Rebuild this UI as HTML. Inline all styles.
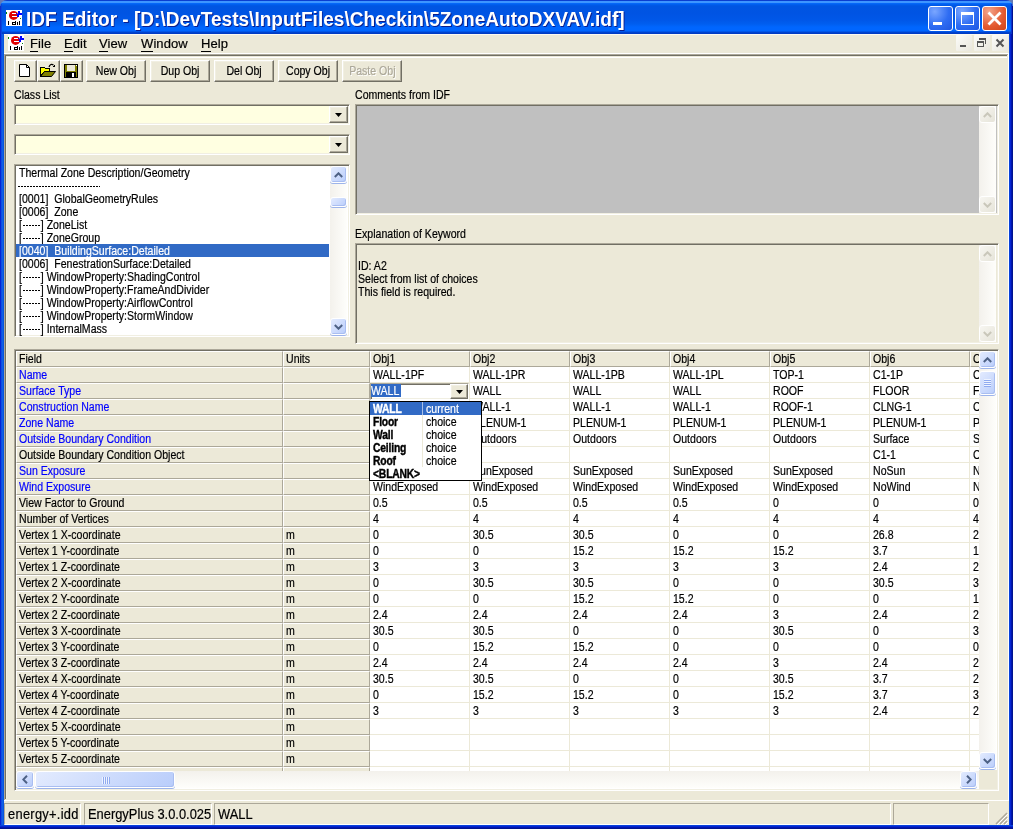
<!DOCTYPE html>
<html><head><meta charset="utf-8"><style>
*{box-sizing:border-box}
html,body{margin:0;padding:0}
body{width:1013px;height:829px;overflow:hidden;position:relative;background:#ece9d8;font-family:"Liberation Sans",sans-serif;font-size:12px;color:#000}
.a{position:absolute}
.t{position:absolute;white-space:nowrap;line-height:13px;font-size:12px;transform:scaleX(.88);transform-origin:0 0;-webkit-text-stroke:0.2px}
.s{display:inline-block;transform:scaleX(.88);transform-origin:0 0;-webkit-text-stroke:0.2px}
#title{left:0;top:0;width:1013px;height:34px;border-radius:7px 7px 0 0;
background:linear-gradient(to bottom,#0a3ed0 0px,#0a3ed0 1px,#3d95ff 1px,#3d95ff 3px,#0a6cff 3px,#0062f2 4px,#0055e2 6px,#0054e3 13px,#0057e8 20px,#005eef 24px,#0066fe 27px,#0066ff 31px,#0046d2 32px,#0038c0 34px)}
#corner{left:0;top:0;width:1013px;height:8px;background:#6379b5}
#ttext{left:26px;top:8px;font-size:20px;line-height:22px;transform:scaleX(.953);transform-origin:0 0;font-weight:bold;color:#fff;white-space:nowrap;text-shadow:1px 1px 0 #0a1e8e}
#lb{left:0;top:34px;width:4px;height:795px;background:linear-gradient(to right,#0019cf,#0831d9 1px,#166aee 2px,#0855dd 3px)}
#rb{left:1009px;top:34px;width:4px;height:795px;background:linear-gradient(to right,#0855dd,#0831d9 1px,#0019cf 2px,#00138f 3px)}
#bb{left:0;top:825px;width:1013px;height:4px;background:linear-gradient(to bottom,#0855dd,#0831d9 1px,#0019cf 2px,#00138f 3px)}
.tb{border-radius:3px;border:1px solid #fff}
.sunk{border:1px solid;border-color:#aca899 #fff #fff #aca899;box-shadow:inset 1px 1px 0 #716f64,inset -1px -1px 0 #f1efe2}
.rais{border:1px solid;border-color:#fff #716f64 #716f64 #fff;box-shadow:inset -1px -1px 0 #aca899,inset 1px 1px 0 #f1efe2;background:#ece9d8}
.btn{text-align:center;line-height:20px}
.menu{font-size:13px;line-height:16px;letter-spacing:0.1px;transform:none}
.menu u{text-decoration:none;border-bottom:1px solid #000}
.xbtn{border:1px solid #fff;border-radius:3px;background:linear-gradient(135deg,#e3ebfe,#b9cdfb);box-shadow:inset -1px -1px 0 #a9bef1,0 1px 0 #9db4ea}
.dbtn{border:1px solid #fff;border-radius:3px;background:linear-gradient(135deg,#f7f6f1,#e6e4d9)}
.dsh{display:inline-block;width:20.5px;height:1px;margin:0 0.6px 0 0.3px;vertical-align:3px;background:repeating-linear-gradient(to right,currentColor 0 2.27px,transparent 2.27px 3.41px)}
.cell{position:absolute;white-space:nowrap;overflow:hidden;line-height:13px;font-size:12px}
</style></head><body><div id="root" style="position:absolute;left:0;top:0;width:1013px;height:829px;will-change:transform">
<div class="a" id="corner"></div><div class="a" id="title"></div>
<div class="a" style="left:0;top:6px;width:1px;height:28px;background:#0a2fcf"></div><div class="a" style="left:1px;top:4px;width:1px;height:30px;background:#0846dc"></div><div class="a" style="left:1012px;top:6px;width:1px;height:28px;background:#00138f"></div><div class="a" style="left:1011px;top:4px;width:1px;height:30px;background:#0a2fcf"></div><svg class="a" style="left:6px;top:10px" width="16" height="16" viewBox="0 0 16 16" shape-rendering="crispEdges"><rect width="16" height="16" fill="#fff"/><ellipse cx="7.6" cy="5.4" rx="4.6" ry="4.5" fill="#e00000" shape-rendering="auto"/><rect x="6" y="3" width="4" height="1" fill="#fff"/><rect x="10" y="3" width="1" height="1" fill="#00f"/><rect x="6" y="6" width="5" height="1" fill="#fff"/><rect x="12" y="1" width="2" height="3" fill="#00f"/><rect x="12" y="3" width="4" height="1.5" fill="#00f"/><rect x="11" y="4" width="2" height="3" fill="#00f"/><rect x="0" y="2" width="1" height="2" fill="#080"/><rect x="14" y="8" width="1" height="1" fill="#080"/><rect x="2" y="11" width="1" height="4" fill="#000"/><path d="M6.5 12.5 H9.5 V14.5 H6.5 Z" fill="none" stroke="#000" stroke-width="1"/><rect x="9" y="11" width="1" height="4" fill="#000"/><rect x="11" y="12" width="1" height="3" fill="#000"/><rect x="13" y="11" width="1" height="4" fill="#000"/></svg><div class="a" id="ttext">IDF Editor - [D:\DevTests\InputFiles\Checkin\5ZoneAutoDXVAV.idf]</div>
<div class="a tb" style="left:928px;top:6px;width:25px;height:25px;background:radial-gradient(circle at 25% 20%,#7aa6ff,#2f6df3 55%,#1f57e2)"><div class="a" style="left:4px;top:15px;width:9px;height:3px;background:#fff"></div></div>
<div class="a tb" style="left:955px;top:6px;width:25px;height:25px;background:radial-gradient(circle at 25% 20%,#7aa6ff,#2f6df3 55%,#1f57e2)"><div class="a" style="left:5px;top:5px;width:13px;height:13px;border:1px solid #fff;border-top-width:3px"></div></div>
<div class="a tb" style="left:982px;top:6px;width:25px;height:25px;background:radial-gradient(circle at 25% 20%,#f3a58c,#e3592f 60%,#cc4418)"><svg class="a" style="left:4px;top:4px" width="15" height="15" viewBox="0 0 15 15"><path d="M1.5 1.5 L13.5 13.5 M13.5 1.5 L1.5 13.5" stroke="#fff" stroke-width="2.8"/></svg></div>
<div class="a" id="lb"></div><div class="a" id="rb"></div><div class="a" id="bb"></div>
<div class="a" style="left:4px;top:34px;width:1005px;height:1px;background:#fdfaf0"></div><svg class="a" style="left:8px;top:35px" width="16" height="16" viewBox="0 0 16 16" shape-rendering="crispEdges"><rect width="16" height="16" fill="#fff"/><ellipse cx="7.6" cy="5.4" rx="4.6" ry="4.5" fill="#e00000" shape-rendering="auto"/><rect x="6" y="3" width="4" height="1" fill="#fff"/><rect x="10" y="3" width="1" height="1" fill="#00f"/><rect x="6" y="6" width="5" height="1" fill="#fff"/><rect x="12" y="1" width="2" height="3" fill="#00f"/><rect x="12" y="3" width="4" height="1.5" fill="#00f"/><rect x="11" y="4" width="2" height="3" fill="#00f"/><rect x="0" y="2" width="1" height="2" fill="#080"/><rect x="14" y="8" width="1" height="1" fill="#080"/><rect x="2" y="11" width="1" height="4" fill="#000"/><path d="M6.5 12.5 H9.5 V14.5 H6.5 Z" fill="none" stroke="#000" stroke-width="1"/><rect x="9" y="11" width="1" height="4" fill="#000"/><rect x="11" y="12" width="1" height="3" fill="#000"/><rect x="13" y="11" width="1" height="4" fill="#000"/></svg><div class="t menu" style="left:30px;top:36px"><u>F</u>ile</div><div class="t menu" style="left:64px;top:36px"><u>E</u>dit</div><div class="t menu" style="left:99px;top:36px"><u>V</u>iew</div><div class="t menu" style="left:141px;top:36px"><u>W</u>indow</div><div class="t menu" style="left:201px;top:36px"><u>H</u>elp</div><div class="a" style="left:956px;top:35px;width:16px;height:16px;background:linear-gradient(135deg,#fcfcf9,#e8e6dc);border-radius:1px"><div class="a" style="left:4px;top:10px;width:6px;height:2px;background:#555"></div></div><div class="a" style="left:974px;top:35px;width:16px;height:16px;background:linear-gradient(135deg,#fcfcf9,#e8e6dc);border-radius:1px"><div class="a" style="left:3px;top:6px;width:7px;height:6px;border:1px solid #555;border-top-width:2px"></div><div class="a" style="left:5px;top:3px;width:7px;height:2px;background:#555"></div><div class="a" style="left:11px;top:3px;width:1px;height:6px;background:#555"></div></div><div class="a" style="left:992px;top:35px;width:16px;height:16px;background:linear-gradient(135deg,#fcfcf9,#e8e6dc);border-radius:1px"><svg class="a" style="left:3px;top:3px" width="10" height="10" viewBox="0 0 10 10"><path d="M1.5 1.5 L8.5 8.5 M8.5 1.5 L1.5 8.5" stroke="#555" stroke-width="2"/></svg></div><div class="a" style="left:4px;top:53px;width:1005px;height:1px;background:#fff"></div><div class="a" style="left:4px;top:54px;width:1004px;height:1px;background:#aca899"></div><div class="a" style="left:5px;top:55px;width:1002px;height:1px;background:#716f64"></div><div class="a" style="left:4px;top:54px;width:1px;height:746px;background:#aca899"></div><div class="a" style="left:5px;top:55px;width:1px;height:744px;background:#716f64"></div><div class="a" style="left:6px;top:57px;width:1001px;height:1px;background:#fff"></div><div class="a" style="left:6px;top:57px;width:1px;height:742px;background:#f5f2e2"></div><div class="a" style="left:4px;top:800px;width:1005px;height:1px;background:#fff"></div><div class="a" style="left:1008px;top:54px;width:1px;height:747px;background:#fff"></div>
<div class="a rais" style="left:14px;top:60px;width:23px;height:22px"></div><div class="a rais" style="left:37px;top:60px;width:23px;height:22px"></div><div class="a rais" style="left:60px;top:60px;width:23px;height:22px"></div><svg class="a" style="left:18px;top:63px" width="14" height="16" viewBox="0 0 14 16"><path d="M1.5 1.5 H8.5 L11.5 4.5 V13.5 H1.5 Z" fill="#fff" stroke="#000" stroke-width="1"/><path d="M8.5 1.5 V4.5 H11.5" fill="none" stroke="#000" stroke-width="1"/></svg><svg class="a" style="left:39px;top:62px" width="18" height="16" viewBox="0 0 18 16" shape-rendering="crispEdges"><path d="M10 5 Q11.5 1 14.5 3" fill="none" stroke="#000" stroke-width="1.2" shape-rendering="auto"/><path d="M13 5 H16 V2 Z" fill="#000"/><path d="M1.5 5.5 H5.5 L6.5 6.5 H10.5 V9.5 H5.5 L1.5 14.5 Z" fill="#ffff00" stroke="#000" stroke-width="1"/><path d="M1.5 14.5 L5.5 9.5 H16.5 L12.5 14.5 Z" fill="#808000" stroke="#000" stroke-width="1" shape-rendering="auto"/></svg><svg class="a" style="left:64px;top:64px" width="14" height="14" viewBox="0 0 14 14" shape-rendering="crispEdges"><rect width="14" height="14" fill="#000"/><rect x="1" y="1" width="12" height="12" fill="#808000"/><rect x="3" y="1" width="8" height="6" fill="#ece9d8"/><rect x="2" y="8" width="10" height="6" fill="#000"/><rect x="8" y="9" width="2" height="4" fill="#fff"/><rect x="12" y="1" width="1" height="1" fill="#fff"/></svg>
<div class="a rais btn" style="left:86px;top:60px;width:60px;height:22px;color:#000"><span class="s" style="transform-origin:50% 0">New Obj</span></div>
<div class="a rais btn" style="left:150px;top:60px;width:60px;height:22px;color:#000"><span class="s" style="transform-origin:50% 0">Dup Obj</span></div>
<div class="a rais btn" style="left:214px;top:60px;width:60px;height:22px;color:#000"><span class="s" style="transform-origin:50% 0">Del Obj</span></div>
<div class="a rais btn" style="left:278px;top:60px;width:60px;height:22px;color:#000"><span class="s" style="transform-origin:50% 0">Copy Obj</span></div>
<div class="a rais btn" style="left:342px;top:60px;width:60px;height:22px;color:#aca899;text-shadow:1px 1px 0 #fff"><span class="s" style="transform-origin:50% 0">Paste Obj</span></div>
<div class="t" style="left:14px;top:89px;">Class List</div>
<div class="a sunk" style="left:14px;top:104px;width:336px;height:21px;background:#ffffe1"></div><div class="a rais" style="left:329px;top:106px;width:19px;height:17px"><svg class="a" style="left:5px;top:6px" width="7" height="4" viewBox="0 0 7 4"><path d="M0 0 H7 L3.5 4 Z" fill="#000"/></svg></div>
<div class="a sunk" style="left:14px;top:134px;width:336px;height:21px;background:#ffffe1"></div><div class="a rais" style="left:329px;top:136px;width:19px;height:17px"><svg class="a" style="left:5px;top:6px" width="7" height="4" viewBox="0 0 7 4"><path d="M0 0 H7 L3.5 4 Z" fill="#000"/></svg></div>
<div class="a sunk" style="left:14px;top:164px;width:336px;height:173px;background:#fff"></div>
<div class="t" style="left:18.5px;top:167px;">Thermal Zone Description/Geometry</div>
<div class="a" style="left:18px;top:186px;width:82px;height:1px;background:repeating-linear-gradient(to right,#000 0 2px,transparent 2px 3px)"></div>
<div class="t" style="left:18.5px;top:193px;">[0001]&nbsp; GlobalGeometryRules</div>
<div class="t" style="left:18.5px;top:206px;">[0006]&nbsp; Zone</div>
<div class="t" style="left:18.5px;top:219px;">[<span class="dsh"></span>]&nbsp;ZoneList</div>
<div class="t" style="left:18.5px;top:232px;">[<span class="dsh"></span>]&nbsp;ZoneGroup</div>
<div class="a" style="left:16px;top:244px;width:313px;height:13px;background:#316ac5"></div><div class="t" style="left:18.5px;top:245px;color:#fff">[0040]&nbsp; BuildingSurface:Detailed</div>
<div class="t" style="left:18.5px;top:258px;">[0006]&nbsp; FenestrationSurface:Detailed</div>
<div class="t" style="left:18.5px;top:271px;">[<span class="dsh"></span>]&nbsp;WindowProperty:ShadingControl</div>
<div class="t" style="left:18.5px;top:284px;">[<span class="dsh"></span>]&nbsp;WindowProperty:FrameAndDivider</div>
<div class="t" style="left:18.5px;top:297px;">[<span class="dsh"></span>]&nbsp;WindowProperty:AirflowControl</div>
<div class="t" style="left:18.5px;top:310px;">[<span class="dsh"></span>]&nbsp;WindowProperty:StormWindow</div>
<div class="t" style="left:18.5px;top:323px;">[<span class="dsh"></span>]&nbsp;InternalMass</div>
<div class="a" style="left:330px;top:166px;width:17px;height:169px;background:linear-gradient(to right,#f3f1ec,#fefefb)"></div><div class="a xbtn" style="left:330px;top:166px;width:17px;height:17px"><svg class="a" style="left:3px;top:5px" width="9" height="6" viewBox="0 0 9 6"><path d="M0.8 5 L4.5 1.3 L8.2 5" fill="none" stroke="#4d6185" stroke-width="2"/></svg></div><div class="a xbtn" style="left:330px;top:318px;width:17px;height:17px"><svg class="a" style="left:3px;top:5px" width="9" height="6" viewBox="0 0 9 6"><path d="M0.8 1 L4.5 4.7 L8.2 1" fill="none" stroke="#4d6185" stroke-width="2"/></svg></div><div class="a xbtn" style="left:330px;top:197px;width:17px;height:10px"></div>
<div class="t" style="left:355px;top:89px;">Comments from IDF</div>
<div class="a sunk" style="left:355px;top:104px;width:644px;height:111px;background:#c0c0c0"></div><div class="a" style="left:979px;top:106px;width:17px;height:107px;background:linear-gradient(to right,#f3f1ec,#fefefb)"></div><div class="a dbtn" style="left:979px;top:106px;width:17px;height:17px"><svg class="a" style="left:3px;top:5px" width="9" height="6" viewBox="0 0 9 6"><path d="M0.8 5 L4.5 1.3 L8.2 5" fill="none" stroke="#c9c7ba" stroke-width="2"/></svg></div><div class="a dbtn" style="left:979px;top:196px;width:17px;height:17px"><svg class="a" style="left:3px;top:5px" width="9" height="6" viewBox="0 0 9 6"><path d="M0.8 1 L4.5 4.7 L8.2 1" fill="none" stroke="#c9c7ba" stroke-width="2"/></svg></div>
<div class="t" style="left:355px;top:228px;">Explanation of Keyword</div>
<div class="a sunk" style="left:355px;top:243px;width:644px;height:101px;background:#ece9d8"></div><div class="a" style="left:979px;top:245px;width:17px;height:97px;background:linear-gradient(to right,#f3f1ec,#fefefb)"></div><div class="a dbtn" style="left:979px;top:245px;width:17px;height:17px"><svg class="a" style="left:3px;top:5px" width="9" height="6" viewBox="0 0 9 6"><path d="M0.8 5 L4.5 1.3 L8.2 5" fill="none" stroke="#c9c7ba" stroke-width="2"/></svg></div><div class="a dbtn" style="left:979px;top:325px;width:17px;height:17px"><svg class="a" style="left:3px;top:5px" width="9" height="6" viewBox="0 0 9 6"><path d="M0.8 1 L4.5 4.7 L8.2 1" fill="none" stroke="#c9c7ba" stroke-width="2"/></svg></div>
<div class="t" style="left:358px;top:260px;">ID: A2</div>
<div class="t" style="left:358px;top:273px;">Select from list of choices</div>
<div class="t" style="left:358px;top:286px;">This field is required.</div>
<div class="a sunk" style="left:14px;top:349px;width:985px;height:442px;background:#fff"></div><div class="a" style="left:16px;top:351px;width:963px;height:420px;overflow:hidden">
<div class="cell" style="left:0px;top:0px;width:267px;height:16px;background:#ece9d8;border-left:1px solid #fff;border-top:1px solid #fff;border-right:1px solid #aca899;border-bottom:1px solid #aca899;padding:1px 0 0 2px;color:#000"><span class="s">Field</span></div>
<div class="cell" style="left:267px;top:0px;width:87px;height:16px;background:#ece9d8;border-left:1px solid #fff;border-top:1px solid #fff;border-right:1px solid #aca899;border-bottom:1px solid #aca899;padding:1px 0 0 2px;color:#000"><span class="s">Units</span></div>
<div class="cell" style="left:354px;top:0px;width:100px;height:16px;background:#ece9d8;border-left:1px solid #fff;border-top:1px solid #fff;border-right:1px solid #aca899;border-bottom:1px solid #aca899;padding:1px 0 0 2px;color:#000"><span class="s">Obj1</span></div>
<div class="cell" style="left:454px;top:0px;width:100px;height:16px;background:#ece9d8;border-left:1px solid #fff;border-top:1px solid #fff;border-right:1px solid #aca899;border-bottom:1px solid #aca899;padding:1px 0 0 2px;color:#000"><span class="s">Obj2</span></div>
<div class="cell" style="left:554px;top:0px;width:100px;height:16px;background:#ece9d8;border-left:1px solid #fff;border-top:1px solid #fff;border-right:1px solid #aca899;border-bottom:1px solid #aca899;padding:1px 0 0 2px;color:#000"><span class="s">Obj3</span></div>
<div class="cell" style="left:654px;top:0px;width:100px;height:16px;background:#ece9d8;border-left:1px solid #fff;border-top:1px solid #fff;border-right:1px solid #aca899;border-bottom:1px solid #aca899;padding:1px 0 0 2px;color:#000"><span class="s">Obj4</span></div>
<div class="cell" style="left:754px;top:0px;width:100px;height:16px;background:#ece9d8;border-left:1px solid #fff;border-top:1px solid #fff;border-right:1px solid #aca899;border-bottom:1px solid #aca899;padding:1px 0 0 2px;color:#000"><span class="s">Obj5</span></div>
<div class="cell" style="left:854px;top:0px;width:100px;height:16px;background:#ece9d8;border-left:1px solid #fff;border-top:1px solid #fff;border-right:1px solid #aca899;border-bottom:1px solid #aca899;padding:1px 0 0 2px;color:#000"><span class="s">Obj6</span></div>
<div class="cell" style="left:954px;top:0px;width:100px;height:16px;background:#ece9d8;border-left:1px solid #fff;border-top:1px solid #fff;border-right:1px solid #aca899;border-bottom:1px solid #aca899;padding:1px 0 0 2px;color:#000"><span class="s">Obj7</span></div>
<div class="cell" style="left:0px;top:16px;width:267px;height:16px;background:#ece9d8;border-left:1px solid #fff;border-top:1px solid #fff;border-right:1px solid #aca899;border-bottom:1px solid #aca899;padding:1px 0 0 2px;color:#0000ff"><span class="s">Name</span></div>
<div class="cell" style="left:267px;top:16px;width:87px;height:16px;background:#ece9d8;border-left:1px solid #fff;border-top:1px solid #fff;border-right:1px solid #aca899;border-bottom:1px solid #aca899;padding:1px 0 0 2px;color:#000"></div>
<div class="cell" style="left:354px;top:16px;width:100px;height:16px;background:#fff;border-right:1px solid #ece9d8;border-bottom:1px solid #ece9d8;padding:2px 0 0 3px"><span class="s">WALL-1PF</span></div><div class="cell" style="left:454px;top:16px;width:100px;height:16px;background:#fff;border-right:1px solid #ece9d8;border-bottom:1px solid #ece9d8;padding:2px 0 0 3px"><span class="s">WALL-1PR</span></div><div class="cell" style="left:554px;top:16px;width:100px;height:16px;background:#fff;border-right:1px solid #ece9d8;border-bottom:1px solid #ece9d8;padding:2px 0 0 3px"><span class="s">WALL-1PB</span></div><div class="cell" style="left:654px;top:16px;width:100px;height:16px;background:#fff;border-right:1px solid #ece9d8;border-bottom:1px solid #ece9d8;padding:2px 0 0 3px"><span class="s">WALL-1PL</span></div><div class="cell" style="left:754px;top:16px;width:100px;height:16px;background:#fff;border-right:1px solid #ece9d8;border-bottom:1px solid #ece9d8;padding:2px 0 0 3px"><span class="s">TOP-1</span></div><div class="cell" style="left:854px;top:16px;width:100px;height:16px;background:#fff;border-right:1px solid #ece9d8;border-bottom:1px solid #ece9d8;padding:2px 0 0 3px"><span class="s">C1-1P</span></div><div class="cell" style="left:954px;top:16px;width:100px;height:16px;background:#fff;border-right:1px solid #ece9d8;border-bottom:1px solid #ece9d8;padding:2px 0 0 3px"><span class="s">C1-1C</span></div>
<div class="cell" style="left:0px;top:32px;width:267px;height:16px;background:#ece9d8;border-left:1px solid #fff;border-top:1px solid #fff;border-right:1px solid #aca899;border-bottom:1px solid #aca899;padding:1px 0 0 2px;color:#0000ff"><span class="s">Surface Type</span></div>
<div class="cell" style="left:267px;top:32px;width:87px;height:16px;background:#ece9d8;border-left:1px solid #fff;border-top:1px solid #fff;border-right:1px solid #aca899;border-bottom:1px solid #aca899;padding:1px 0 0 2px;color:#000"></div>
<div class="cell" style="left:354px;top:32px;width:100px;height:16px;background:#fff;border-right:1px solid #ece9d8;border-bottom:1px solid #ece9d8;padding:2px 0 0 3px"></div><div class="cell" style="left:454px;top:32px;width:100px;height:16px;background:#fff;border-right:1px solid #ece9d8;border-bottom:1px solid #ece9d8;padding:2px 0 0 3px"><span class="s">WALL</span></div><div class="cell" style="left:554px;top:32px;width:100px;height:16px;background:#fff;border-right:1px solid #ece9d8;border-bottom:1px solid #ece9d8;padding:2px 0 0 3px"><span class="s">WALL</span></div><div class="cell" style="left:654px;top:32px;width:100px;height:16px;background:#fff;border-right:1px solid #ece9d8;border-bottom:1px solid #ece9d8;padding:2px 0 0 3px"><span class="s">WALL</span></div><div class="cell" style="left:754px;top:32px;width:100px;height:16px;background:#fff;border-right:1px solid #ece9d8;border-bottom:1px solid #ece9d8;padding:2px 0 0 3px"><span class="s">ROOF</span></div><div class="cell" style="left:854px;top:32px;width:100px;height:16px;background:#fff;border-right:1px solid #ece9d8;border-bottom:1px solid #ece9d8;padding:2px 0 0 3px"><span class="s">FLOOR</span></div><div class="cell" style="left:954px;top:32px;width:100px;height:16px;background:#fff;border-right:1px solid #ece9d8;border-bottom:1px solid #ece9d8;padding:2px 0 0 3px"><span class="s">FLOOR</span></div>
<div class="cell" style="left:0px;top:48px;width:267px;height:16px;background:#ece9d8;border-left:1px solid #fff;border-top:1px solid #fff;border-right:1px solid #aca899;border-bottom:1px solid #aca899;padding:1px 0 0 2px;color:#0000ff"><span class="s">Construction Name</span></div>
<div class="cell" style="left:267px;top:48px;width:87px;height:16px;background:#ece9d8;border-left:1px solid #fff;border-top:1px solid #fff;border-right:1px solid #aca899;border-bottom:1px solid #aca899;padding:1px 0 0 2px;color:#000"></div>
<div class="cell" style="left:354px;top:48px;width:100px;height:16px;background:#fff;border-right:1px solid #ece9d8;border-bottom:1px solid #ece9d8;padding:2px 0 0 3px"><span class="s">WALL-1</span></div><div class="cell" style="left:454px;top:48px;width:100px;height:16px;background:#fff;border-right:1px solid #ece9d8;border-bottom:1px solid #ece9d8;padding:2px 0 0 3px"><span class="s">WALL-1</span></div><div class="cell" style="left:554px;top:48px;width:100px;height:16px;background:#fff;border-right:1px solid #ece9d8;border-bottom:1px solid #ece9d8;padding:2px 0 0 3px"><span class="s">WALL-1</span></div><div class="cell" style="left:654px;top:48px;width:100px;height:16px;background:#fff;border-right:1px solid #ece9d8;border-bottom:1px solid #ece9d8;padding:2px 0 0 3px"><span class="s">WALL-1</span></div><div class="cell" style="left:754px;top:48px;width:100px;height:16px;background:#fff;border-right:1px solid #ece9d8;border-bottom:1px solid #ece9d8;padding:2px 0 0 3px"><span class="s">ROOF-1</span></div><div class="cell" style="left:854px;top:48px;width:100px;height:16px;background:#fff;border-right:1px solid #ece9d8;border-bottom:1px solid #ece9d8;padding:2px 0 0 3px"><span class="s">CLNG-1</span></div><div class="cell" style="left:954px;top:48px;width:100px;height:16px;background:#fff;border-right:1px solid #ece9d8;border-bottom:1px solid #ece9d8;padding:2px 0 0 3px"><span class="s">CLNG-1</span></div>
<div class="cell" style="left:0px;top:64px;width:267px;height:16px;background:#ece9d8;border-left:1px solid #fff;border-top:1px solid #fff;border-right:1px solid #aca899;border-bottom:1px solid #aca899;padding:1px 0 0 2px;color:#0000ff"><span class="s">Zone Name</span></div>
<div class="cell" style="left:267px;top:64px;width:87px;height:16px;background:#ece9d8;border-left:1px solid #fff;border-top:1px solid #fff;border-right:1px solid #aca899;border-bottom:1px solid #aca899;padding:1px 0 0 2px;color:#000"></div>
<div class="cell" style="left:354px;top:64px;width:100px;height:16px;background:#fff;border-right:1px solid #ece9d8;border-bottom:1px solid #ece9d8;padding:2px 0 0 3px"><span class="s">PLENUM-1</span></div><div class="cell" style="left:454px;top:64px;width:100px;height:16px;background:#fff;border-right:1px solid #ece9d8;border-bottom:1px solid #ece9d8;padding:2px 0 0 3px"><span class="s">PLENUM-1</span></div><div class="cell" style="left:554px;top:64px;width:100px;height:16px;background:#fff;border-right:1px solid #ece9d8;border-bottom:1px solid #ece9d8;padding:2px 0 0 3px"><span class="s">PLENUM-1</span></div><div class="cell" style="left:654px;top:64px;width:100px;height:16px;background:#fff;border-right:1px solid #ece9d8;border-bottom:1px solid #ece9d8;padding:2px 0 0 3px"><span class="s">PLENUM-1</span></div><div class="cell" style="left:754px;top:64px;width:100px;height:16px;background:#fff;border-right:1px solid #ece9d8;border-bottom:1px solid #ece9d8;padding:2px 0 0 3px"><span class="s">PLENUM-1</span></div><div class="cell" style="left:854px;top:64px;width:100px;height:16px;background:#fff;border-right:1px solid #ece9d8;border-bottom:1px solid #ece9d8;padding:2px 0 0 3px"><span class="s">PLENUM-1</span></div><div class="cell" style="left:954px;top:64px;width:100px;height:16px;background:#fff;border-right:1px solid #ece9d8;border-bottom:1px solid #ece9d8;padding:2px 0 0 3px"><span class="s">PLENUM-1</span></div>
<div class="cell" style="left:0px;top:80px;width:267px;height:16px;background:#ece9d8;border-left:1px solid #fff;border-top:1px solid #fff;border-right:1px solid #aca899;border-bottom:1px solid #aca899;padding:1px 0 0 2px;color:#0000ff"><span class="s">Outside Boundary Condition</span></div>
<div class="cell" style="left:267px;top:80px;width:87px;height:16px;background:#ece9d8;border-left:1px solid #fff;border-top:1px solid #fff;border-right:1px solid #aca899;border-bottom:1px solid #aca899;padding:1px 0 0 2px;color:#000"></div>
<div class="cell" style="left:354px;top:80px;width:100px;height:16px;background:#fff;border-right:1px solid #ece9d8;border-bottom:1px solid #ece9d8;padding:2px 0 0 3px"><span class="s">Outdoors</span></div><div class="cell" style="left:454px;top:80px;width:100px;height:16px;background:#fff;border-right:1px solid #ece9d8;border-bottom:1px solid #ece9d8;padding:2px 0 0 3px"><span class="s">Outdoors</span></div><div class="cell" style="left:554px;top:80px;width:100px;height:16px;background:#fff;border-right:1px solid #ece9d8;border-bottom:1px solid #ece9d8;padding:2px 0 0 3px"><span class="s">Outdoors</span></div><div class="cell" style="left:654px;top:80px;width:100px;height:16px;background:#fff;border-right:1px solid #ece9d8;border-bottom:1px solid #ece9d8;padding:2px 0 0 3px"><span class="s">Outdoors</span></div><div class="cell" style="left:754px;top:80px;width:100px;height:16px;background:#fff;border-right:1px solid #ece9d8;border-bottom:1px solid #ece9d8;padding:2px 0 0 3px"><span class="s">Outdoors</span></div><div class="cell" style="left:854px;top:80px;width:100px;height:16px;background:#fff;border-right:1px solid #ece9d8;border-bottom:1px solid #ece9d8;padding:2px 0 0 3px"><span class="s">Surface</span></div><div class="cell" style="left:954px;top:80px;width:100px;height:16px;background:#fff;border-right:1px solid #ece9d8;border-bottom:1px solid #ece9d8;padding:2px 0 0 3px"><span class="s">Surface</span></div>
<div class="cell" style="left:0px;top:96px;width:267px;height:16px;background:#ece9d8;border-left:1px solid #fff;border-top:1px solid #fff;border-right:1px solid #aca899;border-bottom:1px solid #aca899;padding:1px 0 0 2px;color:#000"><span class="s">Outside Boundary Condition Object</span></div>
<div class="cell" style="left:267px;top:96px;width:87px;height:16px;background:#ece9d8;border-left:1px solid #fff;border-top:1px solid #fff;border-right:1px solid #aca899;border-bottom:1px solid #aca899;padding:1px 0 0 2px;color:#000"></div>
<div class="cell" style="left:354px;top:96px;width:100px;height:16px;background:#fff;border-right:1px solid #ece9d8;border-bottom:1px solid #ece9d8;padding:2px 0 0 3px"></div><div class="cell" style="left:454px;top:96px;width:100px;height:16px;background:#fff;border-right:1px solid #ece9d8;border-bottom:1px solid #ece9d8;padding:2px 0 0 3px"></div><div class="cell" style="left:554px;top:96px;width:100px;height:16px;background:#fff;border-right:1px solid #ece9d8;border-bottom:1px solid #ece9d8;padding:2px 0 0 3px"></div><div class="cell" style="left:654px;top:96px;width:100px;height:16px;background:#fff;border-right:1px solid #ece9d8;border-bottom:1px solid #ece9d8;padding:2px 0 0 3px"></div><div class="cell" style="left:754px;top:96px;width:100px;height:16px;background:#fff;border-right:1px solid #ece9d8;border-bottom:1px solid #ece9d8;padding:2px 0 0 3px"></div><div class="cell" style="left:854px;top:96px;width:100px;height:16px;background:#fff;border-right:1px solid #ece9d8;border-bottom:1px solid #ece9d8;padding:2px 0 0 3px"><span class="s">C1-1</span></div><div class="cell" style="left:954px;top:96px;width:100px;height:16px;background:#fff;border-right:1px solid #ece9d8;border-bottom:1px solid #ece9d8;padding:2px 0 0 3px"><span class="s">C1-1</span></div>
<div class="cell" style="left:0px;top:112px;width:267px;height:16px;background:#ece9d8;border-left:1px solid #fff;border-top:1px solid #fff;border-right:1px solid #aca899;border-bottom:1px solid #aca899;padding:1px 0 0 2px;color:#0000ff"><span class="s">Sun Exposure</span></div>
<div class="cell" style="left:267px;top:112px;width:87px;height:16px;background:#ece9d8;border-left:1px solid #fff;border-top:1px solid #fff;border-right:1px solid #aca899;border-bottom:1px solid #aca899;padding:1px 0 0 2px;color:#000"></div>
<div class="cell" style="left:354px;top:112px;width:100px;height:16px;background:#fff;border-right:1px solid #ece9d8;border-bottom:1px solid #ece9d8;padding:2px 0 0 3px"><span class="s">SunExposed</span></div><div class="cell" style="left:454px;top:112px;width:100px;height:16px;background:#fff;border-right:1px solid #ece9d8;border-bottom:1px solid #ece9d8;padding:2px 0 0 3px"><span class="s">SunExposed</span></div><div class="cell" style="left:554px;top:112px;width:100px;height:16px;background:#fff;border-right:1px solid #ece9d8;border-bottom:1px solid #ece9d8;padding:2px 0 0 3px"><span class="s">SunExposed</span></div><div class="cell" style="left:654px;top:112px;width:100px;height:16px;background:#fff;border-right:1px solid #ece9d8;border-bottom:1px solid #ece9d8;padding:2px 0 0 3px"><span class="s">SunExposed</span></div><div class="cell" style="left:754px;top:112px;width:100px;height:16px;background:#fff;border-right:1px solid #ece9d8;border-bottom:1px solid #ece9d8;padding:2px 0 0 3px"><span class="s">SunExposed</span></div><div class="cell" style="left:854px;top:112px;width:100px;height:16px;background:#fff;border-right:1px solid #ece9d8;border-bottom:1px solid #ece9d8;padding:2px 0 0 3px"><span class="s">NoSun</span></div><div class="cell" style="left:954px;top:112px;width:100px;height:16px;background:#fff;border-right:1px solid #ece9d8;border-bottom:1px solid #ece9d8;padding:2px 0 0 3px"><span class="s">NoSun</span></div>
<div class="cell" style="left:0px;top:128px;width:267px;height:16px;background:#ece9d8;border-left:1px solid #fff;border-top:1px solid #fff;border-right:1px solid #aca899;border-bottom:1px solid #aca899;padding:1px 0 0 2px;color:#0000ff"><span class="s">Wind Exposure</span></div>
<div class="cell" style="left:267px;top:128px;width:87px;height:16px;background:#ece9d8;border-left:1px solid #fff;border-top:1px solid #fff;border-right:1px solid #aca899;border-bottom:1px solid #aca899;padding:1px 0 0 2px;color:#000"></div>
<div class="cell" style="left:354px;top:128px;width:100px;height:16px;background:#fff;border-right:1px solid #ece9d8;border-bottom:1px solid #ece9d8;padding:2px 0 0 3px"><span class="s">WindExposed</span></div><div class="cell" style="left:454px;top:128px;width:100px;height:16px;background:#fff;border-right:1px solid #ece9d8;border-bottom:1px solid #ece9d8;padding:2px 0 0 3px"><span class="s">WindExposed</span></div><div class="cell" style="left:554px;top:128px;width:100px;height:16px;background:#fff;border-right:1px solid #ece9d8;border-bottom:1px solid #ece9d8;padding:2px 0 0 3px"><span class="s">WindExposed</span></div><div class="cell" style="left:654px;top:128px;width:100px;height:16px;background:#fff;border-right:1px solid #ece9d8;border-bottom:1px solid #ece9d8;padding:2px 0 0 3px"><span class="s">WindExposed</span></div><div class="cell" style="left:754px;top:128px;width:100px;height:16px;background:#fff;border-right:1px solid #ece9d8;border-bottom:1px solid #ece9d8;padding:2px 0 0 3px"><span class="s">WindExposed</span></div><div class="cell" style="left:854px;top:128px;width:100px;height:16px;background:#fff;border-right:1px solid #ece9d8;border-bottom:1px solid #ece9d8;padding:2px 0 0 3px"><span class="s">NoWind</span></div><div class="cell" style="left:954px;top:128px;width:100px;height:16px;background:#fff;border-right:1px solid #ece9d8;border-bottom:1px solid #ece9d8;padding:2px 0 0 3px"><span class="s">NoWind</span></div>
<div class="cell" style="left:0px;top:144px;width:267px;height:16px;background:#ece9d8;border-left:1px solid #fff;border-top:1px solid #fff;border-right:1px solid #aca899;border-bottom:1px solid #aca899;padding:1px 0 0 2px;color:#000"><span class="s">View Factor to Ground</span></div>
<div class="cell" style="left:267px;top:144px;width:87px;height:16px;background:#ece9d8;border-left:1px solid #fff;border-top:1px solid #fff;border-right:1px solid #aca899;border-bottom:1px solid #aca899;padding:1px 0 0 2px;color:#000"></div>
<div class="cell" style="left:354px;top:144px;width:100px;height:16px;background:#fff;border-right:1px solid #ece9d8;border-bottom:1px solid #ece9d8;padding:2px 0 0 3px"><span class="s">0.5</span></div><div class="cell" style="left:454px;top:144px;width:100px;height:16px;background:#fff;border-right:1px solid #ece9d8;border-bottom:1px solid #ece9d8;padding:2px 0 0 3px"><span class="s">0.5</span></div><div class="cell" style="left:554px;top:144px;width:100px;height:16px;background:#fff;border-right:1px solid #ece9d8;border-bottom:1px solid #ece9d8;padding:2px 0 0 3px"><span class="s">0.5</span></div><div class="cell" style="left:654px;top:144px;width:100px;height:16px;background:#fff;border-right:1px solid #ece9d8;border-bottom:1px solid #ece9d8;padding:2px 0 0 3px"><span class="s">0.5</span></div><div class="cell" style="left:754px;top:144px;width:100px;height:16px;background:#fff;border-right:1px solid #ece9d8;border-bottom:1px solid #ece9d8;padding:2px 0 0 3px"><span class="s">0</span></div><div class="cell" style="left:854px;top:144px;width:100px;height:16px;background:#fff;border-right:1px solid #ece9d8;border-bottom:1px solid #ece9d8;padding:2px 0 0 3px"><span class="s">0</span></div><div class="cell" style="left:954px;top:144px;width:100px;height:16px;background:#fff;border-right:1px solid #ece9d8;border-bottom:1px solid #ece9d8;padding:2px 0 0 3px"><span class="s">0</span></div>
<div class="cell" style="left:0px;top:160px;width:267px;height:16px;background:#ece9d8;border-left:1px solid #fff;border-top:1px solid #fff;border-right:1px solid #aca899;border-bottom:1px solid #aca899;padding:1px 0 0 2px;color:#000"><span class="s">Number of Vertices</span></div>
<div class="cell" style="left:267px;top:160px;width:87px;height:16px;background:#ece9d8;border-left:1px solid #fff;border-top:1px solid #fff;border-right:1px solid #aca899;border-bottom:1px solid #aca899;padding:1px 0 0 2px;color:#000"></div>
<div class="cell" style="left:354px;top:160px;width:100px;height:16px;background:#fff;border-right:1px solid #ece9d8;border-bottom:1px solid #ece9d8;padding:2px 0 0 3px"><span class="s">4</span></div><div class="cell" style="left:454px;top:160px;width:100px;height:16px;background:#fff;border-right:1px solid #ece9d8;border-bottom:1px solid #ece9d8;padding:2px 0 0 3px"><span class="s">4</span></div><div class="cell" style="left:554px;top:160px;width:100px;height:16px;background:#fff;border-right:1px solid #ece9d8;border-bottom:1px solid #ece9d8;padding:2px 0 0 3px"><span class="s">4</span></div><div class="cell" style="left:654px;top:160px;width:100px;height:16px;background:#fff;border-right:1px solid #ece9d8;border-bottom:1px solid #ece9d8;padding:2px 0 0 3px"><span class="s">4</span></div><div class="cell" style="left:754px;top:160px;width:100px;height:16px;background:#fff;border-right:1px solid #ece9d8;border-bottom:1px solid #ece9d8;padding:2px 0 0 3px"><span class="s">4</span></div><div class="cell" style="left:854px;top:160px;width:100px;height:16px;background:#fff;border-right:1px solid #ece9d8;border-bottom:1px solid #ece9d8;padding:2px 0 0 3px"><span class="s">4</span></div><div class="cell" style="left:954px;top:160px;width:100px;height:16px;background:#fff;border-right:1px solid #ece9d8;border-bottom:1px solid #ece9d8;padding:2px 0 0 3px"><span class="s">4</span></div>
<div class="cell" style="left:0px;top:176px;width:267px;height:16px;background:#ece9d8;border-left:1px solid #fff;border-top:1px solid #fff;border-right:1px solid #aca899;border-bottom:1px solid #aca899;padding:1px 0 0 2px;color:#000"><span class="s">Vertex 1 X-coordinate</span></div>
<div class="cell" style="left:267px;top:176px;width:87px;height:16px;background:#ece9d8;border-left:1px solid #fff;border-top:1px solid #fff;border-right:1px solid #aca899;border-bottom:1px solid #aca899;padding:1px 0 0 2px;color:#000"><span class="s">m</span></div>
<div class="cell" style="left:354px;top:176px;width:100px;height:16px;background:#fff;border-right:1px solid #ece9d8;border-bottom:1px solid #ece9d8;padding:2px 0 0 3px"><span class="s">0</span></div><div class="cell" style="left:454px;top:176px;width:100px;height:16px;background:#fff;border-right:1px solid #ece9d8;border-bottom:1px solid #ece9d8;padding:2px 0 0 3px"><span class="s">30.5</span></div><div class="cell" style="left:554px;top:176px;width:100px;height:16px;background:#fff;border-right:1px solid #ece9d8;border-bottom:1px solid #ece9d8;padding:2px 0 0 3px"><span class="s">30.5</span></div><div class="cell" style="left:654px;top:176px;width:100px;height:16px;background:#fff;border-right:1px solid #ece9d8;border-bottom:1px solid #ece9d8;padding:2px 0 0 3px"><span class="s">0</span></div><div class="cell" style="left:754px;top:176px;width:100px;height:16px;background:#fff;border-right:1px solid #ece9d8;border-bottom:1px solid #ece9d8;padding:2px 0 0 3px"><span class="s">0</span></div><div class="cell" style="left:854px;top:176px;width:100px;height:16px;background:#fff;border-right:1px solid #ece9d8;border-bottom:1px solid #ece9d8;padding:2px 0 0 3px"><span class="s">26.8</span></div><div class="cell" style="left:954px;top:176px;width:100px;height:16px;background:#fff;border-right:1px solid #ece9d8;border-bottom:1px solid #ece9d8;padding:2px 0 0 3px"><span class="s">26.8</span></div>
<div class="cell" style="left:0px;top:192px;width:267px;height:16px;background:#ece9d8;border-left:1px solid #fff;border-top:1px solid #fff;border-right:1px solid #aca899;border-bottom:1px solid #aca899;padding:1px 0 0 2px;color:#000"><span class="s">Vertex 1 Y-coordinate</span></div>
<div class="cell" style="left:267px;top:192px;width:87px;height:16px;background:#ece9d8;border-left:1px solid #fff;border-top:1px solid #fff;border-right:1px solid #aca899;border-bottom:1px solid #aca899;padding:1px 0 0 2px;color:#000"><span class="s">m</span></div>
<div class="cell" style="left:354px;top:192px;width:100px;height:16px;background:#fff;border-right:1px solid #ece9d8;border-bottom:1px solid #ece9d8;padding:2px 0 0 3px"><span class="s">0</span></div><div class="cell" style="left:454px;top:192px;width:100px;height:16px;background:#fff;border-right:1px solid #ece9d8;border-bottom:1px solid #ece9d8;padding:2px 0 0 3px"><span class="s">0</span></div><div class="cell" style="left:554px;top:192px;width:100px;height:16px;background:#fff;border-right:1px solid #ece9d8;border-bottom:1px solid #ece9d8;padding:2px 0 0 3px"><span class="s">15.2</span></div><div class="cell" style="left:654px;top:192px;width:100px;height:16px;background:#fff;border-right:1px solid #ece9d8;border-bottom:1px solid #ece9d8;padding:2px 0 0 3px"><span class="s">15.2</span></div><div class="cell" style="left:754px;top:192px;width:100px;height:16px;background:#fff;border-right:1px solid #ece9d8;border-bottom:1px solid #ece9d8;padding:2px 0 0 3px"><span class="s">15.2</span></div><div class="cell" style="left:854px;top:192px;width:100px;height:16px;background:#fff;border-right:1px solid #ece9d8;border-bottom:1px solid #ece9d8;padding:2px 0 0 3px"><span class="s">3.7</span></div><div class="cell" style="left:954px;top:192px;width:100px;height:16px;background:#fff;border-right:1px solid #ece9d8;border-bottom:1px solid #ece9d8;padding:2px 0 0 3px"><span class="s">15.2</span></div>
<div class="cell" style="left:0px;top:208px;width:267px;height:16px;background:#ece9d8;border-left:1px solid #fff;border-top:1px solid #fff;border-right:1px solid #aca899;border-bottom:1px solid #aca899;padding:1px 0 0 2px;color:#000"><span class="s">Vertex 1 Z-coordinate</span></div>
<div class="cell" style="left:267px;top:208px;width:87px;height:16px;background:#ece9d8;border-left:1px solid #fff;border-top:1px solid #fff;border-right:1px solid #aca899;border-bottom:1px solid #aca899;padding:1px 0 0 2px;color:#000"><span class="s">m</span></div>
<div class="cell" style="left:354px;top:208px;width:100px;height:16px;background:#fff;border-right:1px solid #ece9d8;border-bottom:1px solid #ece9d8;padding:2px 0 0 3px"><span class="s">3</span></div><div class="cell" style="left:454px;top:208px;width:100px;height:16px;background:#fff;border-right:1px solid #ece9d8;border-bottom:1px solid #ece9d8;padding:2px 0 0 3px"><span class="s">3</span></div><div class="cell" style="left:554px;top:208px;width:100px;height:16px;background:#fff;border-right:1px solid #ece9d8;border-bottom:1px solid #ece9d8;padding:2px 0 0 3px"><span class="s">3</span></div><div class="cell" style="left:654px;top:208px;width:100px;height:16px;background:#fff;border-right:1px solid #ece9d8;border-bottom:1px solid #ece9d8;padding:2px 0 0 3px"><span class="s">3</span></div><div class="cell" style="left:754px;top:208px;width:100px;height:16px;background:#fff;border-right:1px solid #ece9d8;border-bottom:1px solid #ece9d8;padding:2px 0 0 3px"><span class="s">3</span></div><div class="cell" style="left:854px;top:208px;width:100px;height:16px;background:#fff;border-right:1px solid #ece9d8;border-bottom:1px solid #ece9d8;padding:2px 0 0 3px"><span class="s">2.4</span></div><div class="cell" style="left:954px;top:208px;width:100px;height:16px;background:#fff;border-right:1px solid #ece9d8;border-bottom:1px solid #ece9d8;padding:2px 0 0 3px"><span class="s">2.4</span></div>
<div class="cell" style="left:0px;top:224px;width:267px;height:16px;background:#ece9d8;border-left:1px solid #fff;border-top:1px solid #fff;border-right:1px solid #aca899;border-bottom:1px solid #aca899;padding:1px 0 0 2px;color:#000"><span class="s">Vertex 2 X-coordinate</span></div>
<div class="cell" style="left:267px;top:224px;width:87px;height:16px;background:#ece9d8;border-left:1px solid #fff;border-top:1px solid #fff;border-right:1px solid #aca899;border-bottom:1px solid #aca899;padding:1px 0 0 2px;color:#000"><span class="s">m</span></div>
<div class="cell" style="left:354px;top:224px;width:100px;height:16px;background:#fff;border-right:1px solid #ece9d8;border-bottom:1px solid #ece9d8;padding:2px 0 0 3px"><span class="s">0</span></div><div class="cell" style="left:454px;top:224px;width:100px;height:16px;background:#fff;border-right:1px solid #ece9d8;border-bottom:1px solid #ece9d8;padding:2px 0 0 3px"><span class="s">30.5</span></div><div class="cell" style="left:554px;top:224px;width:100px;height:16px;background:#fff;border-right:1px solid #ece9d8;border-bottom:1px solid #ece9d8;padding:2px 0 0 3px"><span class="s">30.5</span></div><div class="cell" style="left:654px;top:224px;width:100px;height:16px;background:#fff;border-right:1px solid #ece9d8;border-bottom:1px solid #ece9d8;padding:2px 0 0 3px"><span class="s">0</span></div><div class="cell" style="left:754px;top:224px;width:100px;height:16px;background:#fff;border-right:1px solid #ece9d8;border-bottom:1px solid #ece9d8;padding:2px 0 0 3px"><span class="s">0</span></div><div class="cell" style="left:854px;top:224px;width:100px;height:16px;background:#fff;border-right:1px solid #ece9d8;border-bottom:1px solid #ece9d8;padding:2px 0 0 3px"><span class="s">30.5</span></div><div class="cell" style="left:954px;top:224px;width:100px;height:16px;background:#fff;border-right:1px solid #ece9d8;border-bottom:1px solid #ece9d8;padding:2px 0 0 3px"><span class="s">30.5</span></div>
<div class="cell" style="left:0px;top:240px;width:267px;height:16px;background:#ece9d8;border-left:1px solid #fff;border-top:1px solid #fff;border-right:1px solid #aca899;border-bottom:1px solid #aca899;padding:1px 0 0 2px;color:#000"><span class="s">Vertex 2 Y-coordinate</span></div>
<div class="cell" style="left:267px;top:240px;width:87px;height:16px;background:#ece9d8;border-left:1px solid #fff;border-top:1px solid #fff;border-right:1px solid #aca899;border-bottom:1px solid #aca899;padding:1px 0 0 2px;color:#000"><span class="s">m</span></div>
<div class="cell" style="left:354px;top:240px;width:100px;height:16px;background:#fff;border-right:1px solid #ece9d8;border-bottom:1px solid #ece9d8;padding:2px 0 0 3px"><span class="s">0</span></div><div class="cell" style="left:454px;top:240px;width:100px;height:16px;background:#fff;border-right:1px solid #ece9d8;border-bottom:1px solid #ece9d8;padding:2px 0 0 3px"><span class="s">0</span></div><div class="cell" style="left:554px;top:240px;width:100px;height:16px;background:#fff;border-right:1px solid #ece9d8;border-bottom:1px solid #ece9d8;padding:2px 0 0 3px"><span class="s">15.2</span></div><div class="cell" style="left:654px;top:240px;width:100px;height:16px;background:#fff;border-right:1px solid #ece9d8;border-bottom:1px solid #ece9d8;padding:2px 0 0 3px"><span class="s">15.2</span></div><div class="cell" style="left:754px;top:240px;width:100px;height:16px;background:#fff;border-right:1px solid #ece9d8;border-bottom:1px solid #ece9d8;padding:2px 0 0 3px"><span class="s">0</span></div><div class="cell" style="left:854px;top:240px;width:100px;height:16px;background:#fff;border-right:1px solid #ece9d8;border-bottom:1px solid #ece9d8;padding:2px 0 0 3px"><span class="s">0</span></div><div class="cell" style="left:954px;top:240px;width:100px;height:16px;background:#fff;border-right:1px solid #ece9d8;border-bottom:1px solid #ece9d8;padding:2px 0 0 3px"><span class="s">15.2</span></div>
<div class="cell" style="left:0px;top:256px;width:267px;height:16px;background:#ece9d8;border-left:1px solid #fff;border-top:1px solid #fff;border-right:1px solid #aca899;border-bottom:1px solid #aca899;padding:1px 0 0 2px;color:#000"><span class="s">Vertex 2 Z-coordinate</span></div>
<div class="cell" style="left:267px;top:256px;width:87px;height:16px;background:#ece9d8;border-left:1px solid #fff;border-top:1px solid #fff;border-right:1px solid #aca899;border-bottom:1px solid #aca899;padding:1px 0 0 2px;color:#000"><span class="s">m</span></div>
<div class="cell" style="left:354px;top:256px;width:100px;height:16px;background:#fff;border-right:1px solid #ece9d8;border-bottom:1px solid #ece9d8;padding:2px 0 0 3px"><span class="s">2.4</span></div><div class="cell" style="left:454px;top:256px;width:100px;height:16px;background:#fff;border-right:1px solid #ece9d8;border-bottom:1px solid #ece9d8;padding:2px 0 0 3px"><span class="s">2.4</span></div><div class="cell" style="left:554px;top:256px;width:100px;height:16px;background:#fff;border-right:1px solid #ece9d8;border-bottom:1px solid #ece9d8;padding:2px 0 0 3px"><span class="s">2.4</span></div><div class="cell" style="left:654px;top:256px;width:100px;height:16px;background:#fff;border-right:1px solid #ece9d8;border-bottom:1px solid #ece9d8;padding:2px 0 0 3px"><span class="s">2.4</span></div><div class="cell" style="left:754px;top:256px;width:100px;height:16px;background:#fff;border-right:1px solid #ece9d8;border-bottom:1px solid #ece9d8;padding:2px 0 0 3px"><span class="s">3</span></div><div class="cell" style="left:854px;top:256px;width:100px;height:16px;background:#fff;border-right:1px solid #ece9d8;border-bottom:1px solid #ece9d8;padding:2px 0 0 3px"><span class="s">2.4</span></div><div class="cell" style="left:954px;top:256px;width:100px;height:16px;background:#fff;border-right:1px solid #ece9d8;border-bottom:1px solid #ece9d8;padding:2px 0 0 3px"><span class="s">2.4</span></div>
<div class="cell" style="left:0px;top:272px;width:267px;height:16px;background:#ece9d8;border-left:1px solid #fff;border-top:1px solid #fff;border-right:1px solid #aca899;border-bottom:1px solid #aca899;padding:1px 0 0 2px;color:#000"><span class="s">Vertex 3 X-coordinate</span></div>
<div class="cell" style="left:267px;top:272px;width:87px;height:16px;background:#ece9d8;border-left:1px solid #fff;border-top:1px solid #fff;border-right:1px solid #aca899;border-bottom:1px solid #aca899;padding:1px 0 0 2px;color:#000"><span class="s">m</span></div>
<div class="cell" style="left:354px;top:272px;width:100px;height:16px;background:#fff;border-right:1px solid #ece9d8;border-bottom:1px solid #ece9d8;padding:2px 0 0 3px"><span class="s">30.5</span></div><div class="cell" style="left:454px;top:272px;width:100px;height:16px;background:#fff;border-right:1px solid #ece9d8;border-bottom:1px solid #ece9d8;padding:2px 0 0 3px"><span class="s">30.5</span></div><div class="cell" style="left:554px;top:272px;width:100px;height:16px;background:#fff;border-right:1px solid #ece9d8;border-bottom:1px solid #ece9d8;padding:2px 0 0 3px"><span class="s">0</span></div><div class="cell" style="left:654px;top:272px;width:100px;height:16px;background:#fff;border-right:1px solid #ece9d8;border-bottom:1px solid #ece9d8;padding:2px 0 0 3px"><span class="s">0</span></div><div class="cell" style="left:754px;top:272px;width:100px;height:16px;background:#fff;border-right:1px solid #ece9d8;border-bottom:1px solid #ece9d8;padding:2px 0 0 3px"><span class="s">30.5</span></div><div class="cell" style="left:854px;top:272px;width:100px;height:16px;background:#fff;border-right:1px solid #ece9d8;border-bottom:1px solid #ece9d8;padding:2px 0 0 3px"><span class="s">0</span></div><div class="cell" style="left:954px;top:272px;width:100px;height:16px;background:#fff;border-right:1px solid #ece9d8;border-bottom:1px solid #ece9d8;padding:2px 0 0 3px"><span class="s">30.5</span></div>
<div class="cell" style="left:0px;top:288px;width:267px;height:16px;background:#ece9d8;border-left:1px solid #fff;border-top:1px solid #fff;border-right:1px solid #aca899;border-bottom:1px solid #aca899;padding:1px 0 0 2px;color:#000"><span class="s">Vertex 3 Y-coordinate</span></div>
<div class="cell" style="left:267px;top:288px;width:87px;height:16px;background:#ece9d8;border-left:1px solid #fff;border-top:1px solid #fff;border-right:1px solid #aca899;border-bottom:1px solid #aca899;padding:1px 0 0 2px;color:#000"><span class="s">m</span></div>
<div class="cell" style="left:354px;top:288px;width:100px;height:16px;background:#fff;border-right:1px solid #ece9d8;border-bottom:1px solid #ece9d8;padding:2px 0 0 3px"><span class="s">0</span></div><div class="cell" style="left:454px;top:288px;width:100px;height:16px;background:#fff;border-right:1px solid #ece9d8;border-bottom:1px solid #ece9d8;padding:2px 0 0 3px"><span class="s">15.2</span></div><div class="cell" style="left:554px;top:288px;width:100px;height:16px;background:#fff;border-right:1px solid #ece9d8;border-bottom:1px solid #ece9d8;padding:2px 0 0 3px"><span class="s">15.2</span></div><div class="cell" style="left:654px;top:288px;width:100px;height:16px;background:#fff;border-right:1px solid #ece9d8;border-bottom:1px solid #ece9d8;padding:2px 0 0 3px"><span class="s">0</span></div><div class="cell" style="left:754px;top:288px;width:100px;height:16px;background:#fff;border-right:1px solid #ece9d8;border-bottom:1px solid #ece9d8;padding:2px 0 0 3px"><span class="s">0</span></div><div class="cell" style="left:854px;top:288px;width:100px;height:16px;background:#fff;border-right:1px solid #ece9d8;border-bottom:1px solid #ece9d8;padding:2px 0 0 3px"><span class="s">0</span></div><div class="cell" style="left:954px;top:288px;width:100px;height:16px;background:#fff;border-right:1px solid #ece9d8;border-bottom:1px solid #ece9d8;padding:2px 0 0 3px"><span class="s">0</span></div>
<div class="cell" style="left:0px;top:304px;width:267px;height:16px;background:#ece9d8;border-left:1px solid #fff;border-top:1px solid #fff;border-right:1px solid #aca899;border-bottom:1px solid #aca899;padding:1px 0 0 2px;color:#000"><span class="s">Vertex 3 Z-coordinate</span></div>
<div class="cell" style="left:267px;top:304px;width:87px;height:16px;background:#ece9d8;border-left:1px solid #fff;border-top:1px solid #fff;border-right:1px solid #aca899;border-bottom:1px solid #aca899;padding:1px 0 0 2px;color:#000"><span class="s">m</span></div>
<div class="cell" style="left:354px;top:304px;width:100px;height:16px;background:#fff;border-right:1px solid #ece9d8;border-bottom:1px solid #ece9d8;padding:2px 0 0 3px"><span class="s">2.4</span></div><div class="cell" style="left:454px;top:304px;width:100px;height:16px;background:#fff;border-right:1px solid #ece9d8;border-bottom:1px solid #ece9d8;padding:2px 0 0 3px"><span class="s">2.4</span></div><div class="cell" style="left:554px;top:304px;width:100px;height:16px;background:#fff;border-right:1px solid #ece9d8;border-bottom:1px solid #ece9d8;padding:2px 0 0 3px"><span class="s">2.4</span></div><div class="cell" style="left:654px;top:304px;width:100px;height:16px;background:#fff;border-right:1px solid #ece9d8;border-bottom:1px solid #ece9d8;padding:2px 0 0 3px"><span class="s">2.4</span></div><div class="cell" style="left:754px;top:304px;width:100px;height:16px;background:#fff;border-right:1px solid #ece9d8;border-bottom:1px solid #ece9d8;padding:2px 0 0 3px"><span class="s">3</span></div><div class="cell" style="left:854px;top:304px;width:100px;height:16px;background:#fff;border-right:1px solid #ece9d8;border-bottom:1px solid #ece9d8;padding:2px 0 0 3px"><span class="s">2.4</span></div><div class="cell" style="left:954px;top:304px;width:100px;height:16px;background:#fff;border-right:1px solid #ece9d8;border-bottom:1px solid #ece9d8;padding:2px 0 0 3px"><span class="s">2.4</span></div>
<div class="cell" style="left:0px;top:320px;width:267px;height:16px;background:#ece9d8;border-left:1px solid #fff;border-top:1px solid #fff;border-right:1px solid #aca899;border-bottom:1px solid #aca899;padding:1px 0 0 2px;color:#000"><span class="s">Vertex 4 X-coordinate</span></div>
<div class="cell" style="left:267px;top:320px;width:87px;height:16px;background:#ece9d8;border-left:1px solid #fff;border-top:1px solid #fff;border-right:1px solid #aca899;border-bottom:1px solid #aca899;padding:1px 0 0 2px;color:#000"><span class="s">m</span></div>
<div class="cell" style="left:354px;top:320px;width:100px;height:16px;background:#fff;border-right:1px solid #ece9d8;border-bottom:1px solid #ece9d8;padding:2px 0 0 3px"><span class="s">30.5</span></div><div class="cell" style="left:454px;top:320px;width:100px;height:16px;background:#fff;border-right:1px solid #ece9d8;border-bottom:1px solid #ece9d8;padding:2px 0 0 3px"><span class="s">30.5</span></div><div class="cell" style="left:554px;top:320px;width:100px;height:16px;background:#fff;border-right:1px solid #ece9d8;border-bottom:1px solid #ece9d8;padding:2px 0 0 3px"><span class="s">0</span></div><div class="cell" style="left:654px;top:320px;width:100px;height:16px;background:#fff;border-right:1px solid #ece9d8;border-bottom:1px solid #ece9d8;padding:2px 0 0 3px"><span class="s">0</span></div><div class="cell" style="left:754px;top:320px;width:100px;height:16px;background:#fff;border-right:1px solid #ece9d8;border-bottom:1px solid #ece9d8;padding:2px 0 0 3px"><span class="s">30.5</span></div><div class="cell" style="left:854px;top:320px;width:100px;height:16px;background:#fff;border-right:1px solid #ece9d8;border-bottom:1px solid #ece9d8;padding:2px 0 0 3px"><span class="s">3.7</span></div><div class="cell" style="left:954px;top:320px;width:100px;height:16px;background:#fff;border-right:1px solid #ece9d8;border-bottom:1px solid #ece9d8;padding:2px 0 0 3px"><span class="s">26.8</span></div>
<div class="cell" style="left:0px;top:336px;width:267px;height:16px;background:#ece9d8;border-left:1px solid #fff;border-top:1px solid #fff;border-right:1px solid #aca899;border-bottom:1px solid #aca899;padding:1px 0 0 2px;color:#000"><span class="s">Vertex 4 Y-coordinate</span></div>
<div class="cell" style="left:267px;top:336px;width:87px;height:16px;background:#ece9d8;border-left:1px solid #fff;border-top:1px solid #fff;border-right:1px solid #aca899;border-bottom:1px solid #aca899;padding:1px 0 0 2px;color:#000"><span class="s">m</span></div>
<div class="cell" style="left:354px;top:336px;width:100px;height:16px;background:#fff;border-right:1px solid #ece9d8;border-bottom:1px solid #ece9d8;padding:2px 0 0 3px"><span class="s">0</span></div><div class="cell" style="left:454px;top:336px;width:100px;height:16px;background:#fff;border-right:1px solid #ece9d8;border-bottom:1px solid #ece9d8;padding:2px 0 0 3px"><span class="s">15.2</span></div><div class="cell" style="left:554px;top:336px;width:100px;height:16px;background:#fff;border-right:1px solid #ece9d8;border-bottom:1px solid #ece9d8;padding:2px 0 0 3px"><span class="s">15.2</span></div><div class="cell" style="left:654px;top:336px;width:100px;height:16px;background:#fff;border-right:1px solid #ece9d8;border-bottom:1px solid #ece9d8;padding:2px 0 0 3px"><span class="s">0</span></div><div class="cell" style="left:754px;top:336px;width:100px;height:16px;background:#fff;border-right:1px solid #ece9d8;border-bottom:1px solid #ece9d8;padding:2px 0 0 3px"><span class="s">15.2</span></div><div class="cell" style="left:854px;top:336px;width:100px;height:16px;background:#fff;border-right:1px solid #ece9d8;border-bottom:1px solid #ece9d8;padding:2px 0 0 3px"><span class="s">3.7</span></div><div class="cell" style="left:954px;top:336px;width:100px;height:16px;background:#fff;border-right:1px solid #ece9d8;border-bottom:1px solid #ece9d8;padding:2px 0 0 3px"><span class="s">3.7</span></div>
<div class="cell" style="left:0px;top:352px;width:267px;height:16px;background:#ece9d8;border-left:1px solid #fff;border-top:1px solid #fff;border-right:1px solid #aca899;border-bottom:1px solid #aca899;padding:1px 0 0 2px;color:#000"><span class="s">Vertex 4 Z-coordinate</span></div>
<div class="cell" style="left:267px;top:352px;width:87px;height:16px;background:#ece9d8;border-left:1px solid #fff;border-top:1px solid #fff;border-right:1px solid #aca899;border-bottom:1px solid #aca899;padding:1px 0 0 2px;color:#000"><span class="s">m</span></div>
<div class="cell" style="left:354px;top:352px;width:100px;height:16px;background:#fff;border-right:1px solid #ece9d8;border-bottom:1px solid #ece9d8;padding:2px 0 0 3px"><span class="s">3</span></div><div class="cell" style="left:454px;top:352px;width:100px;height:16px;background:#fff;border-right:1px solid #ece9d8;border-bottom:1px solid #ece9d8;padding:2px 0 0 3px"><span class="s">3</span></div><div class="cell" style="left:554px;top:352px;width:100px;height:16px;background:#fff;border-right:1px solid #ece9d8;border-bottom:1px solid #ece9d8;padding:2px 0 0 3px"><span class="s">3</span></div><div class="cell" style="left:654px;top:352px;width:100px;height:16px;background:#fff;border-right:1px solid #ece9d8;border-bottom:1px solid #ece9d8;padding:2px 0 0 3px"><span class="s">3</span></div><div class="cell" style="left:754px;top:352px;width:100px;height:16px;background:#fff;border-right:1px solid #ece9d8;border-bottom:1px solid #ece9d8;padding:2px 0 0 3px"><span class="s">3</span></div><div class="cell" style="left:854px;top:352px;width:100px;height:16px;background:#fff;border-right:1px solid #ece9d8;border-bottom:1px solid #ece9d8;padding:2px 0 0 3px"><span class="s">2.4</span></div><div class="cell" style="left:954px;top:352px;width:100px;height:16px;background:#fff;border-right:1px solid #ece9d8;border-bottom:1px solid #ece9d8;padding:2px 0 0 3px"><span class="s">2.4</span></div>
<div class="cell" style="left:0px;top:368px;width:267px;height:16px;background:#ece9d8;border-left:1px solid #fff;border-top:1px solid #fff;border-right:1px solid #aca899;border-bottom:1px solid #aca899;padding:1px 0 0 2px;color:#000"><span class="s">Vertex 5 X-coordinate</span></div>
<div class="cell" style="left:267px;top:368px;width:87px;height:16px;background:#ece9d8;border-left:1px solid #fff;border-top:1px solid #fff;border-right:1px solid #aca899;border-bottom:1px solid #aca899;padding:1px 0 0 2px;color:#000"><span class="s">m</span></div>
<div class="cell" style="left:354px;top:368px;width:100px;height:16px;background:#fff;border-right:1px solid #ece9d8;border-bottom:1px solid #ece9d8;padding:2px 0 0 3px"></div><div class="cell" style="left:454px;top:368px;width:100px;height:16px;background:#fff;border-right:1px solid #ece9d8;border-bottom:1px solid #ece9d8;padding:2px 0 0 3px"></div><div class="cell" style="left:554px;top:368px;width:100px;height:16px;background:#fff;border-right:1px solid #ece9d8;border-bottom:1px solid #ece9d8;padding:2px 0 0 3px"></div><div class="cell" style="left:654px;top:368px;width:100px;height:16px;background:#fff;border-right:1px solid #ece9d8;border-bottom:1px solid #ece9d8;padding:2px 0 0 3px"></div><div class="cell" style="left:754px;top:368px;width:100px;height:16px;background:#fff;border-right:1px solid #ece9d8;border-bottom:1px solid #ece9d8;padding:2px 0 0 3px"></div><div class="cell" style="left:854px;top:368px;width:100px;height:16px;background:#fff;border-right:1px solid #ece9d8;border-bottom:1px solid #ece9d8;padding:2px 0 0 3px"></div><div class="cell" style="left:954px;top:368px;width:100px;height:16px;background:#fff;border-right:1px solid #ece9d8;border-bottom:1px solid #ece9d8;padding:2px 0 0 3px"></div>
<div class="cell" style="left:0px;top:384px;width:267px;height:16px;background:#ece9d8;border-left:1px solid #fff;border-top:1px solid #fff;border-right:1px solid #aca899;border-bottom:1px solid #aca899;padding:1px 0 0 2px;color:#000"><span class="s">Vertex 5 Y-coordinate</span></div>
<div class="cell" style="left:267px;top:384px;width:87px;height:16px;background:#ece9d8;border-left:1px solid #fff;border-top:1px solid #fff;border-right:1px solid #aca899;border-bottom:1px solid #aca899;padding:1px 0 0 2px;color:#000"><span class="s">m</span></div>
<div class="cell" style="left:354px;top:384px;width:100px;height:16px;background:#fff;border-right:1px solid #ece9d8;border-bottom:1px solid #ece9d8;padding:2px 0 0 3px"></div><div class="cell" style="left:454px;top:384px;width:100px;height:16px;background:#fff;border-right:1px solid #ece9d8;border-bottom:1px solid #ece9d8;padding:2px 0 0 3px"></div><div class="cell" style="left:554px;top:384px;width:100px;height:16px;background:#fff;border-right:1px solid #ece9d8;border-bottom:1px solid #ece9d8;padding:2px 0 0 3px"></div><div class="cell" style="left:654px;top:384px;width:100px;height:16px;background:#fff;border-right:1px solid #ece9d8;border-bottom:1px solid #ece9d8;padding:2px 0 0 3px"></div><div class="cell" style="left:754px;top:384px;width:100px;height:16px;background:#fff;border-right:1px solid #ece9d8;border-bottom:1px solid #ece9d8;padding:2px 0 0 3px"></div><div class="cell" style="left:854px;top:384px;width:100px;height:16px;background:#fff;border-right:1px solid #ece9d8;border-bottom:1px solid #ece9d8;padding:2px 0 0 3px"></div><div class="cell" style="left:954px;top:384px;width:100px;height:16px;background:#fff;border-right:1px solid #ece9d8;border-bottom:1px solid #ece9d8;padding:2px 0 0 3px"></div>
<div class="cell" style="left:0px;top:400px;width:267px;height:16px;background:#ece9d8;border-left:1px solid #fff;border-top:1px solid #fff;border-right:1px solid #aca899;border-bottom:1px solid #aca899;padding:1px 0 0 2px;color:#000"><span class="s">Vertex 5 Z-coordinate</span></div>
<div class="cell" style="left:267px;top:400px;width:87px;height:16px;background:#ece9d8;border-left:1px solid #fff;border-top:1px solid #fff;border-right:1px solid #aca899;border-bottom:1px solid #aca899;padding:1px 0 0 2px;color:#000"><span class="s">m</span></div>
<div class="cell" style="left:354px;top:400px;width:100px;height:16px;background:#fff;border-right:1px solid #ece9d8;border-bottom:1px solid #ece9d8;padding:2px 0 0 3px"></div><div class="cell" style="left:454px;top:400px;width:100px;height:16px;background:#fff;border-right:1px solid #ece9d8;border-bottom:1px solid #ece9d8;padding:2px 0 0 3px"></div><div class="cell" style="left:554px;top:400px;width:100px;height:16px;background:#fff;border-right:1px solid #ece9d8;border-bottom:1px solid #ece9d8;padding:2px 0 0 3px"></div><div class="cell" style="left:654px;top:400px;width:100px;height:16px;background:#fff;border-right:1px solid #ece9d8;border-bottom:1px solid #ece9d8;padding:2px 0 0 3px"></div><div class="cell" style="left:754px;top:400px;width:100px;height:16px;background:#fff;border-right:1px solid #ece9d8;border-bottom:1px solid #ece9d8;padding:2px 0 0 3px"></div><div class="cell" style="left:854px;top:400px;width:100px;height:16px;background:#fff;border-right:1px solid #ece9d8;border-bottom:1px solid #ece9d8;padding:2px 0 0 3px"></div><div class="cell" style="left:954px;top:400px;width:100px;height:16px;background:#fff;border-right:1px solid #ece9d8;border-bottom:1px solid #ece9d8;padding:2px 0 0 3px"></div>
<div class="cell" style="left:0px;top:416px;width:267px;height:16px;background:#ece9d8;border-left:1px solid #fff;border-top:1px solid #fff;border-right:1px solid #aca899;border-bottom:1px solid #aca899;padding:1px 0 0 2px;color:#000"></div>
<div class="cell" style="left:267px;top:416px;width:87px;height:16px;background:#ece9d8;border-left:1px solid #fff;border-top:1px solid #fff;border-right:1px solid #aca899;border-bottom:1px solid #aca899;padding:1px 0 0 2px;color:#000"></div>
<div class="cell" style="left:354px;top:416px;width:100px;height:16px;background:#fff;border-right:1px solid #ece9d8;border-bottom:1px solid #ece9d8;padding:2px 0 0 3px"></div><div class="cell" style="left:454px;top:416px;width:100px;height:16px;background:#fff;border-right:1px solid #ece9d8;border-bottom:1px solid #ece9d8;padding:2px 0 0 3px"></div><div class="cell" style="left:554px;top:416px;width:100px;height:16px;background:#fff;border-right:1px solid #ece9d8;border-bottom:1px solid #ece9d8;padding:2px 0 0 3px"></div><div class="cell" style="left:654px;top:416px;width:100px;height:16px;background:#fff;border-right:1px solid #ece9d8;border-bottom:1px solid #ece9d8;padding:2px 0 0 3px"></div><div class="cell" style="left:754px;top:416px;width:100px;height:16px;background:#fff;border-right:1px solid #ece9d8;border-bottom:1px solid #ece9d8;padding:2px 0 0 3px"></div><div class="cell" style="left:854px;top:416px;width:100px;height:16px;background:#fff;border-right:1px solid #ece9d8;border-bottom:1px solid #ece9d8;padding:2px 0 0 3px"></div><div class="cell" style="left:954px;top:416px;width:100px;height:16px;background:#fff;border-right:1px solid #ece9d8;border-bottom:1px solid #ece9d8;padding:2px 0 0 3px"></div>
</div>
<div class="a sunk" style="left:370px;top:383px;width:99px;height:17px;background:#fff"></div><div class="a" style="left:371px;top:384px;width:30px;height:13px;background:#316ac5"></div><div class="t" style="left:371px;top:385px;color:#fff">WALL</div>
<div class="a rais" style="left:450px;top:384px;width:18px;height:15px"><svg class="a" style="left:5px;top:5px" width="7" height="4" viewBox="0 0 7 4"><path d="M0 0 H7 L3.5 4 Z" fill="#000"/></svg></div>
<div class="a" style="left:369px;top:401px;width:113px;height:80px;background:#fff;border:1px solid #000"></div><div class="a" style="left:370px;top:402px;width:111px;height:13px;background:#316ac5"></div><div class="a" style="left:422px;top:402px;width:1px;height:65px;background:#ece9d8"></div><div class="a" style="left:422px;top:402px;width:1px;height:13px;background:#a9c0e8"></div>
<div class="t" style="left:373px;top:403px;font-weight:bold;transform:scaleX(.86);letter-spacing:-0.2px;-webkit-text-stroke:0.4px #fff;color:#fff">WALL</div>
<div class="t" style="left:426px;top:403px;color:#fff">current</div>
<div class="t" style="left:373px;top:416px;font-weight:bold;transform:scaleX(.86);letter-spacing:-0.2px;-webkit-text-stroke:0.4px #000;color:#000">Floor</div>
<div class="t" style="left:426px;top:416px;color:#000">choice</div>
<div class="t" style="left:373px;top:429px;font-weight:bold;transform:scaleX(.86);letter-spacing:-0.2px;-webkit-text-stroke:0.4px #000;color:#000">Wall</div>
<div class="t" style="left:426px;top:429px;color:#000">choice</div>
<div class="t" style="left:373px;top:442px;font-weight:bold;transform:scaleX(.86);letter-spacing:-0.2px;-webkit-text-stroke:0.4px #000;color:#000">Ceiling</div>
<div class="t" style="left:426px;top:442px;color:#000">choice</div>
<div class="t" style="left:373px;top:455px;font-weight:bold;transform:scaleX(.86);letter-spacing:-0.2px;-webkit-text-stroke:0.4px #000;color:#000">Roof</div>
<div class="t" style="left:426px;top:455px;color:#000">choice</div>
<div class="t" style="left:373px;top:468px;font-weight:bold;transform:scaleX(.86);letter-spacing:-0.2px;-webkit-text-stroke:0.4px #000;color:#000">&lt;BLANK&gt;</div>
<div class="a" style="left:979px;top:351px;width:17px;height:418px;background:linear-gradient(to right,#f3f1ec,#fefefb)"></div><div class="a xbtn" style="left:979px;top:351px;width:17px;height:17px"><svg class="a" style="left:3px;top:5px" width="9" height="6" viewBox="0 0 9 6"><path d="M0.8 5 L4.5 1.3 L8.2 5" fill="none" stroke="#4d6185" stroke-width="2"/></svg></div><div class="a xbtn" style="left:979px;top:752px;width:17px;height:17px"><svg class="a" style="left:3px;top:5px" width="9" height="6" viewBox="0 0 9 6"><path d="M0.8 1 L4.5 4.7 L8.2 1" fill="none" stroke="#4d6185" stroke-width="2"/></svg></div><div class="a xbtn" style="left:979px;top:371px;width:17px;height:24px"><div class="a" style="left:4px;top:calc(50% - 4px);width:7px;height:8px;background:repeating-linear-gradient(to bottom,#eef3ff 0 1px,#8faaf0 1px 2px)"></div></div>
<div class="a" style="left:16px;top:771px;width:963px;height:17px;background:linear-gradient(to bottom,#f3f1ec,#fefefb)"></div><div class="a xbtn" style="left:16px;top:771px;width:18px;height:17px"><svg class="a" style="left:5px;top:3px" width="6" height="9" viewBox="0 0 6 9"><path d="M5 0.8 L1.3 4.5 L5 8.2" fill="none" stroke="#4d6185" stroke-width="2"/></svg></div><div class="a xbtn" style="left:35px;top:771px;width:140px;height:17px"><div class="a" style="left:66px;top:5px;width:8px;height:7px;background:repeating-linear-gradient(to right,#eef3ff 0 1px,#8faaf0 1px 2px)"></div></div><div class="a xbtn" style="left:960px;top:771px;width:17px;height:17px"><svg class="a" style="left:5px;top:3px" width="6" height="9" viewBox="0 0 6 9"><path d="M1 0.8 L4.7 4.5 L1 8.2" fill="none" stroke="#4d6185" stroke-width="2"/></svg></div><div class="a" style="left:979px;top:770px;width:18px;height:19px;background:#ece9d8"></div>
<div class="a" style="left:4px;top:803px;width:77px;height:22px;border:1px solid;border-color:#aca899 #fff #fff #aca899"></div><div class="t" style="left:8px;top:806px;font-size:14px;line-height:16px;letter-spacing:0.3px;transform:scaleX(.92)">energy+.idd</div>
<div class="a" style="left:84px;top:803px;width:128px;height:22px;border:1px solid;border-color:#aca899 #fff #fff #aca899"></div><div class="t" style="left:88px;top:806px;font-size:14px;line-height:16px;letter-spacing:0px;transform:scaleX(.92)">EnergyPlus 3.0.0.025</div>
<div class="a" style="left:214px;top:803px;width:677px;height:22px;border:1px solid;border-color:#aca899 #fff #fff #aca899"></div><div class="t" style="left:218px;top:806px;font-size:14px;line-height:16px;letter-spacing:0px;transform:scaleX(.92)">WALL</div>
<div class="a" style="left:893px;top:803px;width:96px;height:22px;border:1px solid;border-color:#aca899 #fff #fff #aca899"></div><svg class="a" style="left:993px;top:810px" width="15" height="15" viewBox="0 0 15 15"><path d="M14 3 L3 14 M14 7 L7 14 M14 11 L11 14" stroke="#aca899" stroke-width="1.5"/><path d="M15 4 L4 15 M15 8 L8 15 M15 12 L12 15" stroke="#fff" stroke-width="1"/></svg>
</div></body></html>
